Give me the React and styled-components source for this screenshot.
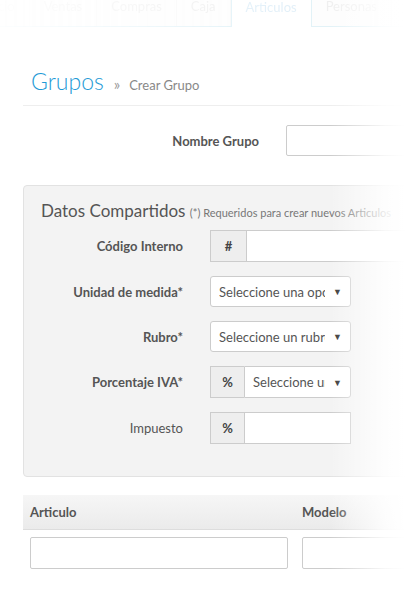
import styled, { createGlobalStyle } from "styled-components";

const GlobalStyle = createGlobalStyle`
  html, body {
    margin: 0;
    padding: 0;
    background: #fff;
    overflow: hidden;
  }
  body {
    font-family: "Lato", "Open Sans", sans-serif;
    color: #555;
  }
`;

const Page = styled.div`
  position: relative;
  width: 416px;
  height: 606px;
  overflow: hidden;
`;

const Content = styled.div`
  width: 640px;
`;

const Fade = styled.div`
  position: absolute;
  inset: 0;
  pointer-events: none;
  background: linear-gradient(
    to right,
    rgba(255, 255, 255, 0) 0,
    rgba(255, 255, 255, 0) 330px,
    rgba(255, 255, 255, 0.85) 385px,
    #fff 405px
  );
`;

const Nav = styled.nav`
  display: flex;
  height: 40px;
  margin-top: -14px;
  margin-left: -30px;
  opacity: 0.13;
  border-bottom: 1px solid #2aa0c8;
  mask-image: linear-gradient(to right, transparent 0, #000 45%, #000 60%, transparent 92%);
`;

const Tab = styled.div`
  display: flex;
  align-items: center;
  padding: 0 14px;
  font-size: 13px;
  color: ${(p) => (p.$active ? "#2a8fd0" : "#888")};
  background: ${(p) => (p.$active ? "#fff" : "#f2f2f2")};
  border-right: 1px solid ${(p) => (p.$active ? "#2aa0c8" : "#ccc")};
  border-left: ${(p) => (p.$active ? "1px solid #2aa0c8" : "none")};
  margin-bottom: ${(p) => (p.$active ? "-1px" : "0")};
`;

const Header = styled.div`
  display: flex;
  align-items: baseline;
  margin: 40px 0 0 23px;
  padding: 0 0 10px 8px;
  border-bottom: 1px solid #eee;
`;

const Title = styled.h1`
  margin: 0;
  font-size: 23px;
  font-weight: 300;
  color: #1e9ad6;
`;

const Crumb = styled.span`
  font-size: 13px;
  color: #888;
  margin-left: 10px;
`;

const Sep = styled.span`
  font-size: 15px;
  color: #999;
  margin-right: 9px;
`;

const TopRow = styled.div`
  display: grid;
  grid-template-columns: 236px 330px;
  column-gap: 27px;
  align-items: center;
  margin: 19px 0 0 23px;
`;

const Label = styled.label`
  text-align: right;
  font-size: 13px;
  font-weight: ${(p) => (p.$light ? 400 : 700)};
  color: #555;
  white-space: nowrap;
`;

const Input = styled.div`
  box-sizing: border-box;
  height: ${(p) => p.$h || 32}px;
  min-width: 0;
  flex: ${(p) => (p.$grow ? 1 : "none")};
  background: #fff;
  border: 1px solid #ccc;
  border-radius: ${(p) => (p.$grouped ? "0" : "2px")};
`;

const Panel = styled.section`
  margin: 29px 0 0 23px;
  padding: 14px 17px 32px;
  background: #f3f3f3;
  border: 1px solid #e2e2e2;
  border-radius: 4px;
`;

const PanelTitle = styled.h2`
  margin: 0 0 9px;
  font-size: 17px;
  font-weight: 400;
  color: #555;
  white-space: nowrap;
`;

const Note = styled.small`
  font-size: 11px;
  color: #777;
`;

const Rows = styled.div`
  display: grid;
  grid-template-columns: 142px auto;
  column-gap: 27px;
  row-gap: 14px;
  align-items: center;
`;

const Group = styled.div`
  display: flex;
  width: ${(p) => (p.$w ? `${p.$w}px` : "auto")};
`;

const Addon = styled.span`
  box-sizing: border-box;
  flex: none;
  display: flex;
  align-items: center;
  justify-content: center;
  width: ${(p) => p.$w || 34}px;
  height: 32px;
  background: #eee;
  border: 1px solid #ccc;
  border-right: none;
  font-size: 13px;
  font-weight: 700;
  color: #444;
`;

const Select = styled.div`
  box-sizing: border-box;
  display: flex;
  align-items: center;
  min-width: 0;
  height: ${(p) => (p.$grouped ? 32 : 31)}px;
  width: ${(p) => (p.$w ? `${p.$w}px` : "auto")};
  flex: ${(p) => (p.$grow ? 1 : "none")};
  padding: 0 8px;
  background: #fff;
  border: 1px solid #ccc;
  border-radius: ${(p) => (p.$grouped ? "0 3px 3px 0" : "3px")};
  font-size: 13px;
  color: #555;
`;

const SelectText = styled.span`
  flex: 1;
  min-width: 0;
  overflow: hidden;
  white-space: nowrap;
`;

const Arrow = styled.span`
  flex: none;
  font-size: 9px;
  color: #333;
  margin-left: 8px;
`;

const Table = styled.div`
  margin: 18px 0 0 23px;
`;

const HeadRow = styled.div`
  display: grid;
  grid-template-columns: 272px 300px;
  height: 34px;
  align-items: center;
  background: linear-gradient(to bottom, #f6f6f6, #ebebeb);
  border-bottom: 1px solid #ddd;
`;

const HeadCell = styled.div`
  padding-left: 7px;
  font-size: 13px;
  font-weight: 700;
  color: #555;
`;

const BodyRow = styled.div`
  display: grid;
  grid-template-columns: 272px 300px;
  padding-top: 7px;
`;

const Cell = styled.div`
  padding: 0 7px;
`;

export default function App() {
  const tabs = ["Inicio", "Ventas", "Compras", "Caja", "Articulos", "Personas", "Reportes"];
  return (
    <Page>
      <GlobalStyle />
      <Content>
        <Nav>
          {tabs.map((t) => (
            <Tab key={t} $active={t === "Articulos"}>
              {t}
            </Tab>
          ))}
        </Nav>

        <Header>
          <Title>Grupos</Title>
          <Crumb>
            <Sep>»</Sep>Crear Grupo
          </Crumb>
        </Header>

        <TopRow>
          <Label>Nombre Grupo</Label>
          <Input $h={31} />
        </TopRow>

        <Panel>
          <PanelTitle>
            Datos Compartidos <Note>(*) Requeridos para crear nuevos Articulos</Note>
          </PanelTitle>
          <Rows>
            <Label>Código Interno</Label>
            <Group $w={330}>
              <Addon $w={36}>#</Addon>
              <Input $grow $grouped />
            </Group>

            <Label>Unidad de medida*</Label>
            <Select $w={141}>
              <SelectText>Seleccione una opción</SelectText>
              <Arrow>▼</Arrow>
            </Select>

            <Label>Rubro*</Label>
            <Select $w={141}>
              <SelectText>Seleccione un rubro</SelectText>
              <Arrow>▼</Arrow>
            </Select>

            <Label>Porcentaje IVA*</Label>
            <Group $w={141}>
              <Addon>%</Addon>
              <Select $grow $grouped>
                <SelectText>Seleccione un IVA</SelectText>
                <Arrow>▼</Arrow>
              </Select>
            </Group>

            <Label $light>Impuesto</Label>
            <Group $w={141}>
              <Addon>%</Addon>
              <Input $grow $grouped />
            </Group>
          </Rows>
        </Panel>

        <Table>
          <HeadRow>
            <HeadCell>Articulo</HeadCell>
            <HeadCell>Modelo</HeadCell>
          </HeadRow>
          <BodyRow>
            <Cell>
              <Input $h={32} />
            </Cell>
            <Cell>
              <Input $h={32} />
            </Cell>
          </BodyRow>
        </Table>
      </Content>
      <Fade />
    </Page>
  );
}
